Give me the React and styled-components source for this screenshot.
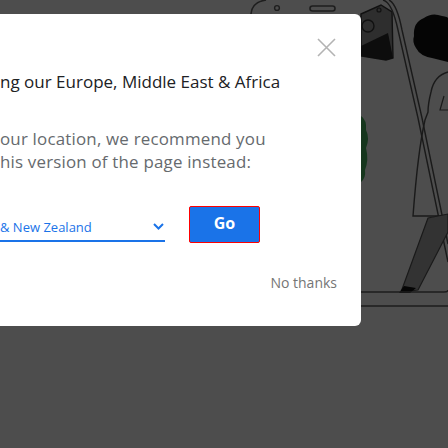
import styled, { createGlobalStyle } from 'styled-components';

const GlobalStyle = createGlobalStyle`
  html, body {
    margin: 0;
    padding: 0;
    background: #4d4d4d;
  }
  body {
    font-family: Roboto, "Liberation Sans", Arial, sans-serif;
  }
`;

const Backdrop = () => (
  <BackdropSvg width="448" height="448" viewBox="0 0 448 448">
    {/* phone top */}
    <path d="M266 0 Q252 2 251 14" fill="none" stroke="#1e1e1e" strokeWidth="1.6" />
    <circle cx="277" cy="8" r="2.4" fill="none" stroke="#1e1e1e" strokeWidth="1.4" />
    <rect x="310" y="6" width="25" height="5" rx="2.5" fill="none" stroke="#1e1e1e" strokeWidth="1.6" />
    {/* price tag */}
    <path d="M361 14 L381 5 L392 12 L393 58 L386 60 L361 56 Z" fill="#2e2e2e" stroke="#111" strokeWidth="1.4" />
    <path d="M361 46 L388 33 L393 58 L386 60 L361 56 Z" fill="#0d0d0d" />
    <circle cx="379" cy="10" r="2" fill="none" stroke="#111" strokeWidth="1.2" />
    <circle cx="368" cy="26" r="6" fill="none" stroke="#111" strokeWidth="1.4" />
    {/* string */}
    <path d="M383 0 Q392 2 398 30 L418 118 L448 262" fill="none" stroke="#1a1a1a" strokeWidth="1.4" />
    <path d="M389 0 Q397 4 402 30 L422 118 L448 244" fill="none" stroke="#1a1a1a" strokeWidth="1.4" />
    {/* head */}
    <path d="M414 36 Q413 22 424 18 Q432 12 442 16 Q448 17 448 18 L448 62 Q440 60 432 58 Q420 56 416 48 Q412 42 414 36 Z" fill="#050505" />
    {/* body */}
    <path d="M448 72 Q434 76 431 92 Q428 104 428 112 L425 120 Q418 150 413 216 L448 216" fill="none" stroke="#1a1a1a" strokeWidth="1.4" />
    <path d="M444 96 L440 110 L448 110" fill="none" stroke="#1a1a1a" strokeWidth="1.2" />
    {/* leg */}
    <path d="M428 218 L448 214 L448 232 L418 290 L401 292 Z" fill="#333" stroke="#1a1a1a" strokeWidth="1.2" />
    <path d="M404 286 L416 288 L410 293 L399 293 Z" fill="#050505" />
    {/* plant */}
    <path d="M361 116 Q367 120 366 130 Q370 138 366 148 Q369 160 365 170 Q366 178 361 182 Z" fill="#16361d" />
    {/* platform */}
    <path d="M361 292 L444 292 Q448 292 448 290" fill="none" stroke="#1c1c1c" strokeWidth="1.6" />
    <path d="M361 306 L448 306" fill="none" stroke="#1c1c1c" strokeWidth="1.6" />
  </BackdropSvg>
);

const App = () => {
  return (
    <>
      <GlobalStyle />
      <Page>
        <Backdrop />
        <Modal>
          <Header>
            <CloseBtn aria-label="close">
              <svg width="19" height="19" viewBox="0 0 19 19">
                <path d="M1 1 L18 18 M18 1 L1 18" stroke="#b3b3b3" strokeWidth="1.6" />
              </svg>
            </CloseBtn>
          </Header>
          <Title>ng our Europe, Middle East &amp; Africa</Title>
          <Body>
            <BodyLine>our location, we recommend you</BodyLine>
            <BodyLine>his version of the page instead:</BodyLine>
          </Body>
          <ChoiceRow>
            <Select>
              <SelectText>&amp; New Zealand</SelectText>
              <svg width="11" height="7" viewBox="0 0 11 7">
                <path d="M1 1 L5.5 5.5 L10 1" fill="none" stroke="#1a73e8" strokeWidth="2" />
              </svg>
            </Select>
            <GoButton>Go</GoButton>
          </ChoiceRow>
          <Footer>
            <NoThanks>No thanks</NoThanks>
          </Footer>
        </Modal>
      </Page>
    </>
  );
};

export default App;

const Page = styled.div`
  position: relative;
  width: 448px;
  height: 448px;
  overflow: hidden;
  background: #4d4d4d;
  padding-top: 14px;
  box-sizing: border-box;
`;

const BackdropSvg = styled.svg`
  position: absolute;
  left: 0;
  top: 0;
`;

const Modal = styled.div`
  position: relative;
  width: 361px;
  height: 312px;
  background: #ffffff;
  border-radius: 0 6px 6px 0;
  display: flex;
  flex-direction: column;
`;

const Header = styled.div`
  display: flex;
  justify-content: flex-end;
  padding: 24px 25px 0 0;
  height: 19px;
`;

const CloseBtn = styled.button`
  border: none;
  background: transparent;
  padding: 0;
  width: 19px;
  height: 19px;
  display: flex;
`;

const Title = styled.div`
  margin-top: 14px;
  font-family: "Open Sans", Roboto, sans-serif;
  font-size: 17px;
  line-height: 22px;
  color: #202124;
  white-space: nowrap;
`;

const Body = styled.div`
  margin-top: 34px;
  display: flex;
  flex-direction: column;
  font-family: "Open Sans", Roboto, sans-serif;
  font-size: 16.9px;
  letter-spacing: 0.2px;
  color: #666a6e;
  white-space: nowrap;
`;

const BodyLine = styled.div`
  line-height: 23px;
  height: 23px;
`;

const ChoiceRow = styled.div`
  margin-top: 33px;
  display: flex;
  align-items: flex-start;
  gap: 24px;
`;

const Select = styled.div`
  margin-top: 6px;
  width: 165px;
  height: 30px;
  box-sizing: border-box;
  border-bottom: 2px solid #1a73e8;
  display: flex;
  align-items: center;
  justify-content: space-between;
  padding-right: 1px;
`;

const SelectText = styled.span`
  font-family: "Open Sans", Roboto, sans-serif;
  font-size: 13px;
  color: #1a73e8;
  padding-top: 1px;
`;

const GoButton = styled.button`
  width: 71px;
  height: 37px;
  box-sizing: border-box;
  border: 1px solid #ff0000;
  border-radius: 2px;
  background: #1a73e8;
  color: #ffffff;
  font-family: "Open Sans", Roboto, sans-serif;
  font-size: 16px;
  font-weight: 700;
  padding: 0 0 3px;
`;

const Footer = styled.div`
  margin-top: 30px;
  display: flex;
  justify-content: flex-end;
  padding-right: 24px;
`;

const NoThanks = styled.span`
  font-family: "Open Sans", Roboto, sans-serif;
  font-size: 14px;
  font-weight: 500;
  color: #757575;
`;
